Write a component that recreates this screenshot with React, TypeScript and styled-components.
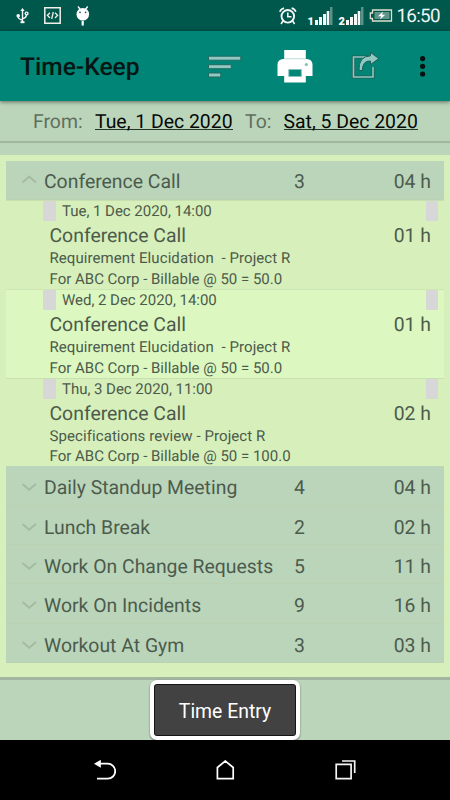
import React from "react";
import styled, { createGlobalStyle } from "styled-components";

const GlobalStyle = createGlobalStyle`
  * { box-sizing: border-box; }
  body { margin: 0; font-family: Roboto, sans-serif; text-rendering: geometricPrecision; }
`;

const Screen = styled.div`
  width: 450px;
  height: 800px;
  display: flex;
  flex-direction: column;
  overflow: hidden;
  background: #bbd5bb;
  color: #4c5b4c;
`;

const StatusBar = styled.header`
  flex: 0 0 31px;
  display: flex;
  align-items: flex-start;
  background: #00574b;
`;

const Icon = styled.svg<{ $left?: number; $top?: number }>`
  flex: none;
  display: block;
  margin-left: ${(p) => p.$left ?? 0}px;
  margin-top: ${(p) => p.$top ?? 0}px;
`;

const SimNumber = styled.text`
  font: 900 11px Roboto, sans-serif;
  fill: #fff;
`;

const Clock = styled.span`
  margin-left: 3.5px;
  padding-top: 1px;
  font-size: 18.8px;
  line-height: 30px;
  letter-spacing: -0.7px;
  color: #eef5f4;
  white-space: nowrap;
`;

const AppBar = styled.nav`
  flex: 0 0 70px;
  display: flex;
  align-items: flex-start;
  background: #008577;
  box-shadow: 0 1px 4px rgba(0, 0, 0, 0.5);
  z-index: 1;
`;

const Title = styled.h1`
  flex: none;
  width: 207px;
  margin: 0;
  padding: 4px 0 0 20px;
  font-size: 24.6px;
  font-weight: 500;
  line-height: 66px;
  color: #061713;
`;

const DateBar = styled.section`
  flex: 0 0 42px;
  display: flex;
  padding: 2px 0 0 33px;
  font-size: 19.4px;
  line-height: 38px;
  white-space: nowrap;
  border-bottom: 2px solid #a0b7a0;
`;

const DateLabel = styled.span<{ $width: number; $indent?: number }>`
  flex: 0 0 ${(p) => p.$width}px;
  padding-left: ${(p) => p.$indent ?? 0}px;
  color: #5f6f5f;
`;

const DateLink = styled.a<{ $width: number }>`
  flex: 0 0 ${(p) => p.$width}px;
  height: 27px;
  color: #050805;
  border-bottom: 1px solid #25382a;
`;

const Report = styled.main`
  flex: 0 0 525px;
  margin-top: 12px;
  padding: 6px;
  background: #d7efba;
  border-bottom: 3px solid #a1b7a1;
  font-size: 19.4px;
`;

const GroupRow = styled.div<{ $open?: boolean }>`
  display: grid;
  grid-template-columns: 38px 250px 60px 77px;
  height: 39.4px;
  line-height: ${(p) => (p.$open ? 41.5 : 43)}px;
  background: #bbd5bb;
  border-bottom: 1px solid #bad2b1;
  white-space: nowrap;
`;

const Hours = styled.span`
  text-align: right;
`;

const Entry = styled.article<{ $light?: boolean }>`
  height: 88.6px;
  padding-left: 37px;
  padding-right: 6px;
  background: ${(p) => (p.$light ? "#dcf7bf" : "#d7efba")};
  border-top: 1px solid ${(p) => (p.$light ? "#cde5b2" : "#c8dfb0")};
`;

const EntryTop = styled.div`
  display: flex;
  height: 20px;
  font-size: 15px;
  line-height: 21px;
  letter-spacing: -0.03px;
`;

const Marker = styled.i`
  width: 12.5px;
  height: 20px;
  background: #d7d7d7;
`;

const EntryDate = styled.time`
  flex: 1;
  padding-left: 6.5px;
`;

const EntryTitle = styled.div`
  display: flex;
  justify-content: space-between;
  padding: 0 7px 0 6.5px;
  height: 27px;
  line-height: 29px;
`;

const EntryNote = styled.div<{ $spacing?: number }>`
  padding-left: 6.5px;
  height: 20.7px;
  font-size: 15px;
  line-height: 21px;
  letter-spacing: ${(p) => p.$spacing ?? 0}px;
  white-space: pre;
`;

const BottomBar = styled.footer`
  flex: 0 0 60px;
  display: flex;
  justify-content: center;
`;

const EntryButton = styled.button`
  width: 150px;
  height: 60px;
  padding: 3px 0 0;
  border: 4px solid #fff;
  border-radius: 7px;
  background: #424242;
  box-shadow: inset 0 0 0 1px #151515, 0 1px 2px rgba(0, 0, 0, 0.5);
  color: #fff;
  font: 19.4px/49px Roboto, sans-serif;
`;

const SystemNav = styled.nav`
  flex: 0 0 60px;
  display: flex;
  align-items: flex-start;
  background: #000;
`;

const entries = [
  { date: "Tue, 1 Dec 2020, 14:00", hours: "01 h", note: "Requirement Elucidation  - Project R", bill: "For ABC Corp - Billable @ 50 = 50.0" },
  { date: "Wed, 2 Dec 2020, 14:00", hours: "01 h", note: "Requirement Elucidation  - Project R", bill: "For ABC Corp - Billable @ 50 = 50.0" },
  { date: "Thu, 3 Dec 2020, 11:00", hours: "02 h", note: "Specifications review - Project R", bill: "For ABC Corp - Billable @ 50 = 100.0" },
];

const groups: [string, number, string][] = [
  ["Daily Standup Meeting", 4, "04 h"],
  ["Lunch Break", 2, "02 h"],
  ["Work On Change Requests", 5, "11 h"],
  ["Work On Incidents", 9, "16 h"],
  ["Workout At Gym", 3, "03 h"],
];

function Group({ name, count, hours, open }: { name: string; count: number; hours: string; open?: boolean }) {
  return (
    <GroupRow $open={open}>
      <Icon width="38" height="38" viewBox="0 0 38 38" fill="none" stroke="#a3bba3" strokeWidth="2">
        <path d={open ? "M16.5 21.5 23.2 15.5 30 21.5" : "M16.5 18 23.2 23.7 30 18"} />
      </Icon>
      <span>{name}</span>
      <span>{count}</span>
      <Hours>{hours}</Hours>
    </GroupRow>
  );
}

function Signal({ sim, left }: { sim: string; left: number }) {
  return (
    <Icon $left={left} $top={4} width="27" height="26" viewBox="-2 -3 27 26">
      <SimNumber x="-0.5" y="18">{sim}</SimNumber>
      <path d="M7 13h3v5H7zM11 10h3v8h-3zM15 7h3v11h-3zM18.7 4h2.6v14h-2.6z" fill="#f4f8f7" />
      <path d="M22 0h2.5v18H22z" fill="#5c9187" />
    </Icon>
  );
}

export default function App() {
  return (
    <>
      <GlobalStyle />
      <Screen>
        <StatusBar>
          <Icon $left={16} $top={8} width="13" height="16" viewBox="0 0 13 16" fill="none" stroke="#f4faf8" strokeWidth="1.4">
            <path d="M6.5 2v12M2.2 8v1.2q0 1.4 4.3 3M10.5 6.5q0 3.5-4 4" />
            <path d="m6.5 0 2.2 3H4.3z" fill="#f4faf8" stroke="none" />
            <circle cx="2.2" cy="7.7" r="1.8" fill="#f4faf8" stroke="none" />
            <circle cx="10.6" cy="5.5" r="1.4" />
            <path d="M4.5 14.2h4" strokeWidth="2" />
          </Icon>
          <Icon $left={15} $top={7} width="17" height="17" viewBox="0 0 17 17" fill="none" stroke="#f0f0e9" strokeWidth="1.5">
            <path d="M.8.8h15.4v15.4H.8z" />
            <path d="M6 5.7 3.4 8.3 6 11M11 5.7l2.6 2.6L11 11M9.3 5 7.7 12" strokeWidth="1.3" />
          </Icon>
          <Icon $left={15} $top={6} width="14" height="20" viewBox="0 0 14 20">
            <path d="m2 .5 2.3 3M11.7.5l-2.3 3" stroke="#fff" strokeWidth="1.3" />
            <circle cx="6.8" cy="8.3" r="6.3" fill="#fff" />
            <path d="M5.6 14.8h2.2v4.8H5.6z" fill="#fff" />
            <circle cx="4" cy="6.4" r=".8" fill="#00574b" />
            <circle cx="9.6" cy="6.4" r=".8" fill="#00574b" />
          </Icon>
          <Icon $left={189} $top={7} width="18" height="18" viewBox="0 0 18 18" fill="none" stroke="#f4f8f7" strokeWidth="1.9">
            <circle cx="8.8" cy="9.3" r="6.3" />
            <path d="M8.8 5.5v4.3h3.7M4 14l-2 3M13.6 14l2 3" strokeWidth="1.6" />
            <path d="M.8 4.7Q1.8 1.8 5 1.1M12.6 1.1Q15.8 1.8 16.8 4.7" strokeWidth="1.8" />
          </Icon>
          <Signal sim="1" left={9} />
          <Signal sim="2" left={4} />
          <Icon $left={5} $top={9} width="24" height="14" viewBox="0 0 24 14">
            <path d="M3.5 1h19v11h-19V9.5H1.3V4h2.2z" fill="none" stroke="#dedfcf" strokeWidth="1.3" />
            <path d="M5.5 3h15v7h-15z" fill="#609489" />
            <path d="m14 2.5-5 4.8h3.2L11 10.5l5.3-4.8H13z" fill="#fff" />
          </Icon>
          <Clock>16:50</Clock>
        </StatusBar>

        <AppBar>
          <Title>Time-Keep</Title>
          <Icon $top={24} width="35" height="24" viewBox="0 0 35 24" fill="#91c8c1" stroke="#236960" strokeWidth="1">
            <path d="M1.5 1.2h32.3v4H1.5zM1.5 9.7h22.8v4H1.5zM1.5 18h12.3v4H1.5z" />
          </Icon>
          <Icon $left={35} $top={19} width="36" height="33" viewBox="0 0 36 33">
            <path d="M7.2 0h21.6v9H30a5.5 5.5 0 0 1 5.5 5.5V26h-6.7v6.5H7.2V26H.5V14.5A5.5 5.5 0 0 1 6 9h1.2z" fill="#fff" />
            <path d="M7.2 8.8h21.6" stroke="#b8dcd7" />
            <path d="M11.8 19.5h12.5v7H11.8z" fill="#008577" stroke="#82c0b9" />
            <circle cx="29.3" cy="14.5" r="1.6" fill="#82c0b9" />
          </Icon>
          <Icon $left={38} $top={20} width="29" height="28" viewBox="0 0 29 28">
            <path d="M17 6H2.5v20H22V16" fill="none" stroke="#205e57" strokeWidth="3.2" />
            <path d="M17 6H2.5v20H22V16" fill="none" stroke="#91c8c1" strokeWidth="1.6" />
            <path d="M8 19.5Q7.3 5.3 19.5 4.8V1.4l8.3 6.2-8.3 6V10Q11.5 9.5 11.3 19.5z" fill="#91c8c1" stroke="#205e57" />
          </Icon>
          <Icon $left={39} $top={24} width="8" height="24" viewBox="0 0 8 24" fill="#04120f">
            <circle cx="3.6" cy="3.6" r="2.6" />
            <circle cx="3.6" cy="11.3" r="2.6" />
            <circle cx="3.6" cy="19" r="2.6" />
          </Icon>
        </AppBar>

        <DateBar>
          <DateLabel $width={62}>From:</DateLabel>
          <DateLink $width={138}>Tue, 1 Dec 2020</DateLink>
          <DateLabel $width={50.5} $indent={12}>To:</DateLabel>
          <DateLink $width={134.5}>Sat, 5 Dec 2020</DateLink>
        </DateBar>

        <Report>
          <Group name="Conference Call" count={3} hours="04 h" open />
          {entries.map((e, i) => (
            <Entry key={e.date} $light={i === 1}>
              <EntryTop>
                <Marker />
                <EntryDate>{e.date}</EntryDate>
                <Marker />
              </EntryTop>
              <EntryTitle>
                <span>Conference Call</span>
                <span>{e.hours}</span>
              </EntryTitle>
              <EntryNote $spacing={0.08}>{e.note}</EntryNote>
              <EntryNote>{e.bill}</EntryNote>
            </Entry>
          ))}
          {groups.map(([name, count, hours]) => (
            <Group key={name} name={name} count={count} hours={hours} />
          ))}
        </Report>

        <BottomBar>
          <EntryButton>Time Entry</EntryButton>
        </BottomBar>

        <SystemNav>
          <Icon $left={94} $top={20} width="22" height="21" viewBox="0 0 22 21">
            <path d="M4 3.7h9.7a7.5 7.5 0 0 1 0 15H3" fill="none" stroke="#fff" strokeWidth="1.8" />
            <path d="m0 3.8 6.8-4v8z" fill="#fff" />
          </Icon>
          <Icon $left={99.5} $top={20} width="20" height="20" viewBox="0 0 20 20" fill="none" stroke="#fff" strokeWidth="1.7">
            <path d="M1.4 18.7V7.5L9.3 1l7.9 6.5v11.2z" />
          </Icon>
          <Icon $left={99} $top={20} width="21" height="20" viewBox="0 0 21 20" fill="none" stroke="#f5f5f5" strokeWidth="1.7">
            <path d="M1.2 4.3h14.9v14.4H1.2z" />
            <path d="M7 1h12.7v12" />
          </Icon>
        </SystemNav>
      </Screen>
    </>
  );
}
